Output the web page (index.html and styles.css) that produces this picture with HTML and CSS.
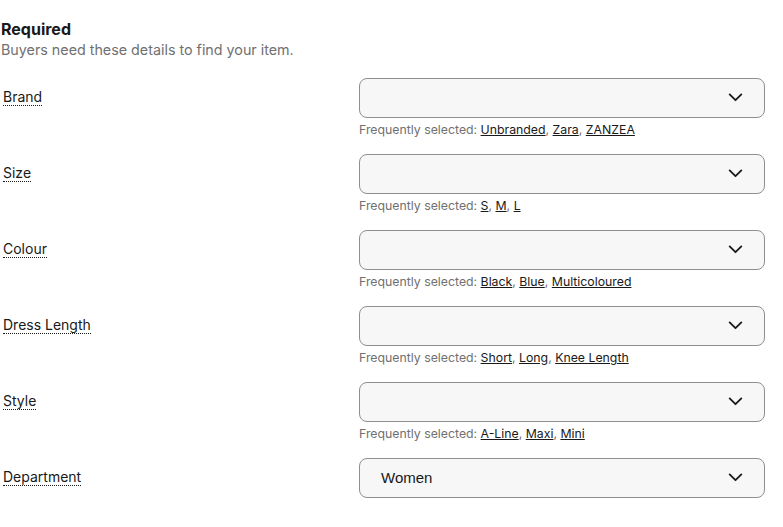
FILE: index.html
```html
<!DOCTYPE html>
<html lang="en">
<head>
<meta charset="utf-8">
<title>Required</title>
<link rel="stylesheet" href="styles.css">
</head>
<body>
<section class="required">
  <header class="head">
    <h2 class="title">Required</h2>
    <p class="subtitle">Buyers need these details to find your item.</p>
  </header>

  <div class="row">
    <div class="label-col"><span class="label">Brand</span></div>
    <div class="field-col">
      <div class="select"><span class="value"></span><svg class="chev" viewBox="0 0 16 10" width="16" height="10"><path d="M1.5 1.5 L8 8 L14.5 1.5" /></svg></div>
      <div class="helper">Frequently selected: <a href="#">Unbranded</a>, <a href="#">Zara</a>, <a href="#">ZANZEA</a></div>
    </div>
  </div>

  <div class="row">
    <div class="label-col"><span class="label">Size</span></div>
    <div class="field-col">
      <div class="select"><span class="value"></span><svg class="chev" viewBox="0 0 16 10" width="16" height="10"><path d="M1.5 1.5 L8 8 L14.5 1.5" /></svg></div>
      <div class="helper">Frequently selected: <a href="#">S</a>, <a href="#">M</a>, <a href="#">L</a></div>
    </div>
  </div>

  <div class="row">
    <div class="label-col"><span class="label">Colour</span></div>
    <div class="field-col">
      <div class="select"><span class="value"></span><svg class="chev" viewBox="0 0 16 10" width="16" height="10"><path d="M1.5 1.5 L8 8 L14.5 1.5" /></svg></div>
      <div class="helper">Frequently selected: <a href="#">Black</a>, <a href="#">Blue</a>, <a href="#">Multicoloured</a></div>
    </div>
  </div>

  <div class="row">
    <div class="label-col"><span class="label">Dress Length</span></div>
    <div class="field-col">
      <div class="select"><span class="value"></span><svg class="chev" viewBox="0 0 16 10" width="16" height="10"><path d="M1.5 1.5 L8 8 L14.5 1.5" /></svg></div>
      <div class="helper">Frequently selected: <a href="#">Short</a>, <a href="#">Long</a>, <a href="#">Knee Length</a></div>
    </div>
  </div>

  <div class="row">
    <div class="label-col"><span class="label">Style</span></div>
    <div class="field-col">
      <div class="select"><span class="value"></span><svg class="chev" viewBox="0 0 16 10" width="16" height="10"><path d="M1.5 1.5 L8 8 L14.5 1.5" /></svg></div>
      <div class="helper">Frequently selected: <a href="#">A-Line</a>, <a href="#">Maxi</a>, <a href="#">Mini</a></div>
    </div>
  </div>

  <div class="row">
    <div class="label-col"><span class="label">Department</span></div>
    <div class="field-col">
      <div class="select"><span class="value">Women</span><svg class="chev" viewBox="0 0 16 10" width="16" height="10"><path d="M1.5 1.5 L8 8 L14.5 1.5" /></svg></div>
    </div>
  </div>
</section>
</body>
</html>
```
FILE: styles.css
```css
* { box-sizing: border-box; }
html, body { margin: 0; padding: 0; background: #fff; }
body {
  font-family: "Inter", "Liberation Sans", sans-serif;
  color: #191919;
}
.required {
  padding: 19px 0 0 1px;
  width: 766px;
}
.head { margin-bottom: 18px; }
.title {
  margin: 0;
  font-size: 16px;
  line-height: 20px;
  font-weight: 700;
  color: #191919;
}
.subtitle {
  margin: 1px 0 0;
  font-size: 14.3px;
  line-height: 20px;
  color: #707070;
}
.row {
  display: flex;
  height: 76px;
}
.label-col {
  width: 358px;
  padding: 8px 0 0 2px;
}
.label {
  font-size: 14px;
  line-height: 20px;
  border-bottom: 1px dotted #191919;
}
.field-col {
  width: 406px;
}
.select {
  height: 40px;
  border: 1px solid #8f8f8f;
  border-radius: 8px;
  background: #f7f7f7;
  display: flex;
  align-items: center;
  justify-content: space-between;
  padding: 0 21px 1px 21px;
}
.value {
  font-family: "Liberation Sans", Arial, sans-serif;
  font-size: 15px;
  color: #191919;
}
.chev {
  width: 15px;
  height: 9px;
  fill: none;
  stroke: #191919;
  stroke-width: 2;
  stroke-linecap: round;
  stroke-linejoin: round;
}
.helper {
  margin-top: 4px;
  font-size: 12.3px;
  line-height: 16px;
  color: #707070;
}
.helper a {
  color: #191919;
  text-decoration: underline;
}
```
